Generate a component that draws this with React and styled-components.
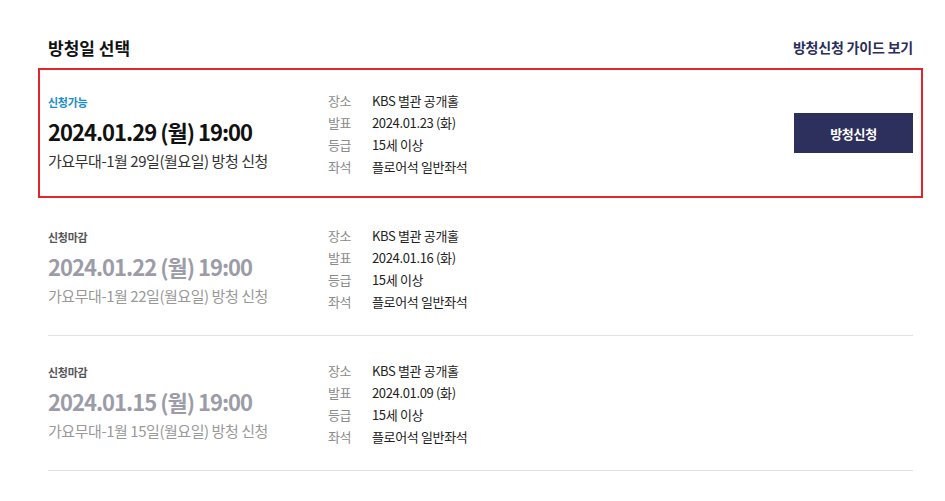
import React from 'react';
import styled, { createGlobalStyle } from 'styled-components';

const GlobalStyle = createGlobalStyle`
  body {
    margin: 0;
    background: #fff;
    font-family: "Noto Sans CJK KR", "Noto Sans", sans-serif;
    color: #222;
  }
`;

const schedules = [
  {
    id: 1,
    open: true,
    date: '2024.01.29 (월) 19:00',
    title: '가요무대-1월 29일(월요일) 방청 신청',
    announce: '2024.01.23 (화)',
  },
  {
    id: 2,
    open: false,
    date: '2024.01.22 (월) 19:00',
    title: '가요무대-1월 22일(월요일) 방청 신청',
    announce: '2024.01.16 (화)',
  },
  {
    id: 3,
    open: false,
    date: '2024.01.15 (월) 19:00',
    title: '가요무대-1월 15일(월요일) 방청 신청',
    announce: '2024.01.09 (화)',
  },
];

const App = () => {
  return (
    <>
      <GlobalStyle />
      <Section>
        <Header>
          <Title>방청일 선택</Title>
          <GuideLink href="#">방청신청 가이드 보기</GuideLink>
        </Header>
        <List>
          {schedules.map((item) => (
            <Item key={item.id} $active={item.open}>
              <Summary>
                <Status $open={item.open}>
                  {item.open ? '신청가능' : '신청마감'}
                </Status>
                <DateText $open={item.open}>{item.date}</DateText>
                <SubTitle $open={item.open}>{item.title}</SubTitle>
              </Summary>
              <Info>
                <Label>장소</Label>
                <Value>KBS 별관 공개홀</Value>
                <Label>발표</Label>
                <Value>{item.announce}</Value>
                <Label>등급</Label>
                <Value>15세 이상</Value>
                <Label>좌석</Label>
                <Value>플로어석 일반좌석</Value>
              </Info>
              {item.open && <ApplyButton>방청신청</ApplyButton>}
            </Item>
          ))}
        </List>
      </Section>
    </>
  );
};

const Section = styled.section`
  width: 885px;
  margin: 0 0 0 38px;
  padding-top: 34px;
`;

const Header = styled.header`
  display: flex;
  justify-content: space-between;
  align-items: center;
  padding: 0 10px;
  height: 26px;
  margin-bottom: 8px;
`;

const Title = styled.h2`
  margin: 0;
  font-size: 17px;
  font-weight: 700;
  letter-spacing: 0;
  color: #111;
`;

const GuideLink = styled.a`
  font-size: 14px;
  font-weight: 700;
  letter-spacing: -0.2px;
  color: #2b2d5a;
  text-decoration: none;
`;

const List = styled.ul`
  list-style: none;
  margin: 0;
  padding: 0;
`;

const Item = styled.li`
  display: flex;
  align-items: center;
  ${({ $active }) =>
    $active
      ? `
    border: 2px solid #e3242d;
    padding: 19px 8px;
    margin-bottom: 3px;
  `
      : `
    margin: 0 10px;
    padding: 23px 0;
    border-bottom: 1px solid #e2e2e2;
  `}
`;

const Summary = styled.div`
  width: 280px;
  display: flex;
  flex-direction: column;
`;

const Status = styled.span`
  font-size: 11px;
  line-height: 16px;
  font-weight: 700;
  letter-spacing: -0.3px;
  color: ${({ $open }) => ($open ? '#168dc8' : '#555')};
  margin-bottom: 6px;
`;

const DateText = styled.strong`
  font-size: 22px;
  line-height: 30px;
  font-weight: 700;
  letter-spacing: -1px;
  color: ${({ $open }) => ($open ? '#111' : '#9b9ca8')};
`;

const SubTitle = styled.span`
  margin-top: 4px;
  font-size: 15px;
  line-height: 22px;
  letter-spacing: -0.45px;
  color: ${({ $open }) => ($open ? '#333' : '#999')};
`;

const Info = styled.dl`
  flex: 1;
  margin: 0;
  display: grid;
  grid-template-columns: 44px auto;
  grid-auto-rows: 22px;
  align-items: center;
  font-size: 13px;
  letter-spacing: -0.35px;
`;

const Label = styled.dt`
  color: #8a8a8a;
`;

const Value = styled.dd`
  margin: 0;
  color: #222;
`;

const ApplyButton = styled.button`
  width: 119px;
  height: 40px;
  border: 0;
  background: #2d2f5d;
  color: #fff;
  font-family: inherit;
  font-size: 13px;
  font-weight: 700;
  letter-spacing: -0.3px;
  cursor: pointer;
`;

export default App;
